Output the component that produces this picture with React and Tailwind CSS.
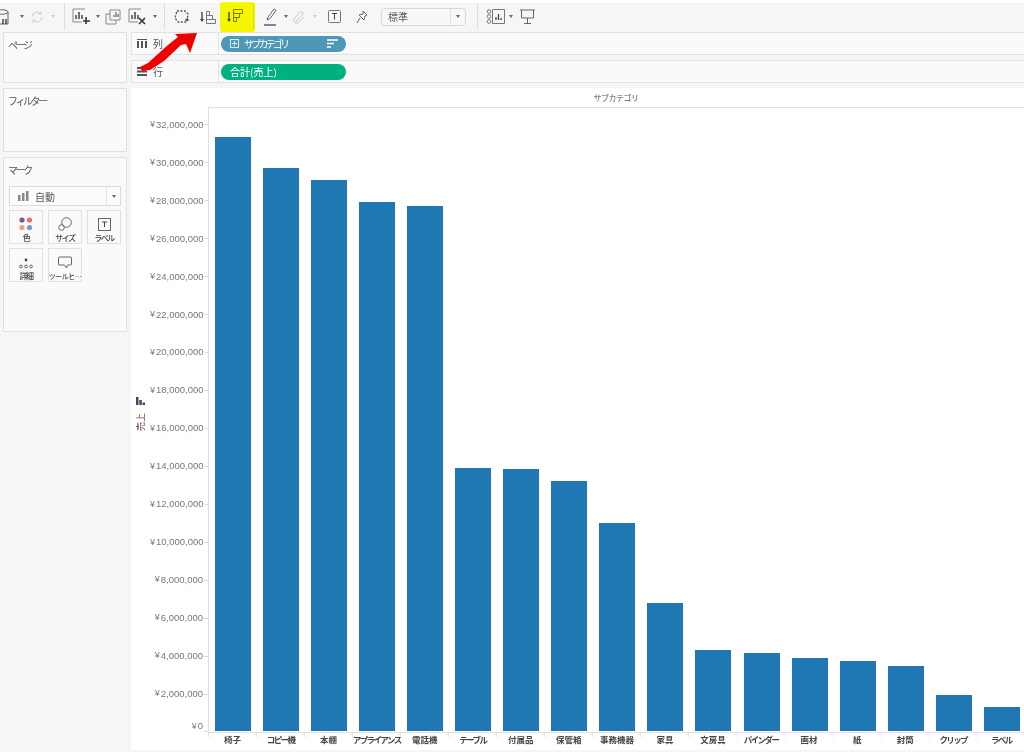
import React from 'react';

const font = { fontFamily: '"Noto Sans CJK JP", sans-serif' };

// sales per sub category, in millions of yen
const bars = [
  { name: '椅子', value: 31.31 },
  { name: 'コピー機', value: 29.68, kana: true },
  { name: '本棚', value: 29.05 },
  { name: 'アプライアンス', value: 27.89, kana: true },
  { name: '電話機', value: 27.68 },
  { name: 'テーブル', value: 13.86, kana: true },
  { name: '付属品', value: 13.81 },
  { name: '保管箱', value: 13.18 },
  { name: '事務機器', value: 10.96 },
  { name: '家具', value: 6.75 },
  { name: '文房具', value: 4.27 },
  { name: 'バインダー', value: 4.11, kana: true },
  { name: '画材', value: 3.85 },
  { name: '紙', value: 3.69 },
  { name: '封筒', value: 3.43 },
  { name: 'クリップ', value: 1.9, kana: true },
  { name: 'ラベル', value: 1.27, kana: true },
];

const ticks = [32, 30, 28, 26, 24, 22, 20, 18, 16, 14, 12, 10, 8, 6, 4, 2];

const Icon = ({ w = 18, h = 18, ml = 0, children, color = '#666' }) => (
  <svg
    width={w}
    height={h}
    viewBox={`0 0 ${w} ${h}`}
    fill="none"
    stroke={color}
    strokeWidth="1"
    className="shrink-0"
    style={{ marginLeft: ml }}
  >
    {children}
  </svg>
);

const Caret = ({ ml = 0, light }) => (
  <span
    className={`w-0 h-0 shrink-0 border-x-[2.5px] border-x-transparent border-t-[3px] ${light ? 'border-t-[#ccc]' : 'border-t-[#666]'}`}
    style={{ marginLeft: ml }}
  />
);

const Sep = ({ ml }) => <span className="w-px h-[27px] bg-[#dedede] shrink-0" style={{ marginLeft: ml }} />;

const Toolbar = () => (
  <div className="h-[32px] flex items-center pb-[2px] bg-[#f6f6f6] border-t-[3px] border-white">
    <Icon w={9} h={18} ml={0}>
      <path d="M-5 4c0-3 13-3 13 0v12H-5z M-5 4c0 3 13 3 13 0" />
      <path d="M3 11v5M6 11v5" stroke="#444" strokeWidth="1.5" />
    </Icon>
    <Caret ml={11} />
    <Icon w={16} h={16} ml={5} color="#ccc">
      <path d="M3 8a5 5 0 0 1 9-3M13 8a5 5 0 0 1-9 3" />
      <path d="M12 2v3H9M4 14v-3h3" />
    </Icon>
    <Caret ml={6} light />
    <Sep ml={9} />
    <Icon w={19} h={19} ml={6}>
      <path d="M14 2H2v13h9" stroke="#888" />
      <path d="M5 12V8M8 12V5M11 12V8" stroke="#444" strokeWidth="1.5" />
      <path d="M15 10v7M12 14h7" stroke="#333" strokeWidth="1.6" />
    </Icon>
    <Caret ml={6} />
    <Icon w={16} h={16} ml={5}>
      <path d="M5 1h10v10H5zM1 5h4M1 5v10h10v-4" stroke="#888" />
      <path d="M9 8V6M11 8V3M13 8V5" stroke="#444" />
    </Icon>
    <Icon w={19} h={19} ml={6}>
      <path d="M14 2H2v13h9" stroke="#888" />
      <path d="M5 12V8M8 12V5M11 12V8" stroke="#444" strokeWidth="1.5" />
      <path d="M12 11l6 6M18 11l-6 6" stroke="#333" strokeWidth="1.6" />
    </Icon>
    <Caret ml={7} />
    <Sep ml={7} />
    <Icon w={18} h={18} ml={8}>
      <path d="M4 3h8l3 3-1 8H5L2 10z" strokeDasharray="2 1.5" stroke="#555" strokeWidth="1.3" />
      <path d="M14 10l-2.500 2.500h5z" fill="#444" stroke="none" />
    </Icon>
    <Icon w={18} h={18} ml={8}>
      <path d="M3 4v9" stroke="#444" strokeWidth="1.4" />
      <path d="M1 11l2 3 2-3z" fill="#444" stroke="none" />
      <path d="M7.500 15.500h9v-4h-9zM7.500 11.500h6v-4h-6zM7.500 7.500h3v-4h-3z" stroke="#777" />
    </Icon>
    <Icon w={18} h={18} ml={9}>
      <path d="M3 4v9" stroke="#444" strokeWidth="1.4" />
      <path d="M1 11l2 3 2-3z" fill="#444" stroke="none" />
      <path d="M7.500 1.500h9v4h-9zM7.500 5.500h6v4h-6zM7.500 9.500h3v4h-3z" stroke="#777" />
    </Icon>
    <Sep ml={9} />
    <Icon w={16} h={20} ml={9}>
      <path d="M4 13l1-3 6-8 2 1.500-6 8z" stroke="#666" />
      <path d="M1 18h12" stroke="#555" strokeWidth="1.4" />
    </Icon>
    <Caret ml={5} />
    <Icon w={14} h={16} ml={4} color="#ccc">
      <path d="M4 13l7-8a2 2 0 0 0-3-2L2 10a3 3 0 0 0 4 4l6-6" />
    </Icon>
    <Caret ml={7} light />
    <Icon w={15} h={15} ml={10}>
      <rect x="1.500" y="1.500" width="12" height="12" rx="1" stroke="#777" />
      <path d="M5 4.500h5M7.500 4.500v6" stroke="#444" />
    </Icon>
    <Icon w={14} h={16} ml={13}>
      <path d="M8 2l4 4-2 1-1 4-5-5 4-1zM5 9l-3 5" stroke="#666" />
    </Icon>
    <div className="flex items-center w-[85px] h-[18px] ml-[12px] bg-[#f8f8f8] border border-[#d8d8d8] rounded-sm">
      <span className="flex-1 pl-[6px] text-[10px] leading-none text-[#555]">標準</span>
      <span className="flex items-center justify-center w-[15px] h-full border-l border-[#e2e2e2]">
        <Caret />
      </span>
    </div>
    <Sep ml={11} />
    <Icon w={20} h={18} ml={8}>
      <circle cx="3" cy="3.500" r="1.800" stroke="#777" />
      <circle cx="3" cy="8.500" r="1.800" stroke="#777" />
      <circle cx="3" cy="13.500" r="1.800" stroke="#777" />
      <path d="M6.500 1.500h12v14h-12z" stroke="#777" />
      <path d="M10 12V9M12.500 12V6M15 12v-2" stroke="#444" strokeWidth="1.3" />
    </Icon>
    <Caret ml={3} />
    <Icon w={17} h={17} ml={6}>
      <path d="M1 2h15M2.500 2v8h12V2M8.500 10v5M5 15.500h7" stroke="#666" />
    </Icon>
  </div>
);

const Shelf = ({ icon, label, pill, pillClass, extra }) => (
  <div className="h-[23px] flex bg-[#fafafa] border-y border-[#e2e2e2]">
    <div className="w-[88px] shrink-0 flex items-center border-x border-[#e2e2e2] pl-[3px] gap-[6px] text-[10px] text-[#555]">
      {icon}
      <span>{label}</span>
    </div>
    <div className="flex-1 flex items-center pl-[2px]">
      <div className={`w-[125px] h-[16px] rounded-full flex items-center text-[10px] text-white ${pillClass}`}>
        {extra}
        <span className={extra ? 'ml-[5px] tracking-[-2.8px]' : 'ml-[9px]'}>{pill}</span>
        {extra && (
          <svg width="11" height="9" viewBox="0 0 11 9" className="ml-auto mr-[8px]" stroke="#fff" strokeWidth="1.500">
            <path d="M0 1h11M0 4.500h7M0 8h4" />
          </svg>
        )}
      </div>
    </div>
  </div>
);

const Card = ({ title, className, children }) => (
  <div className={`bg-[#fafafa] border border-[#e0e0e0] ${className}`}>
    <div className="pl-[4px] pt-[5px] text-[10px] leading-[14px] text-[#555] tracking-[-2.400px]">{title}</div>
    {children}
  </div>
);

const MarkButton = ({ label, children, small }) => (
  <div className="w-[34px] h-[34px] bg-[#fafafa] border border-[#e0e0e0] flex flex-col items-center">
    <div className="h-[20px] flex items-end justify-center">{children}</div>
    <span className={`mt-[2px] leading-[10px] text-[#444] font-medium whitespace-nowrap ${small ? 'text-[7px] tracking-[-0.5px]' : 'text-[8px] tracking-[-1.5px]'}`}>
      {label}
    </span>
  </div>
);

const Marks = () => (
  <Card title="マーク" className="h-[175px] mt-[5px]">
    <div className="mx-[5px] mt-[9px] h-[20px] flex items-center bg-[#fcfcfc] border border-[#dcdcdc]">
      <svg width="12" height="10" viewBox="0 0 12 10" className="ml-[8px]" fill="#888">
        <rect x="0" y="4" width="2.500" height="6" />
        <rect x="4" y="2" width="2.500" height="8" />
        <rect x="8" y="0" width="2.500" height="10" />
      </svg>
      <span className="ml-[5px] flex-1 text-[10px] text-[#555]">自動</span>
      <span className="w-[14px] h-full flex items-center justify-center border-l border-[#e2e2e2]">
        <Caret />
      </span>
    </div>
    <div className="mx-[5px] mt-[4px] grid grid-cols-[34px_34px_35px] gap-x-[5px] gap-y-[4px]">
      <MarkButton label="色">
        <svg width="14" height="14" viewBox="0 0 14 14">
          <circle cx="3" cy="3" r="2.600" fill="#7b5a93" />
          <circle cx="10.500" cy="3" r="2.600" fill="#f0677c" />
          <circle cx="3" cy="10.500" r="2.600" fill="#f0a26a" />
          <circle cx="10.500" cy="10.500" r="2.600" fill="#6f9bd1" />
        </svg>
      </MarkButton>
      <MarkButton label="サイズ">
        <svg width="14" height="14" viewBox="0 0 14 14" fill="none" stroke="#666">
          <circle cx="8.500" cy="5.500" r="4.800" />
          <circle cx="3.500" cy="10.500" r="2.800" />
        </svg>
      </MarkButton>
      <MarkButton label="ラベル">
        <svg width="13" height="13" viewBox="0 0 13 13" fill="none" stroke="#666">
          <rect x="0.500" y="0.500" width="12" height="12" />
          <path d="M4 4h5M6.500 4v5" stroke="#444" />
        </svg>
      </MarkButton>
      <MarkButton label="詳細">
        <svg width="14" height="11" viewBox="0 0 14 11" fill="none" stroke="#666">
          <circle cx="7" cy="2" r="1.400" fill="#444" stroke="none" />
          <circle cx="2" cy="8.500" r="1.400" />
          <circle cx="7" cy="8.500" r="1.400" />
          <circle cx="12" cy="8.500" r="1.400" />
        </svg>
      </MarkButton>
      <MarkButton label="ツールヒ…" small>
        <svg width="14" height="13" viewBox="0 0 14 13" fill="none" stroke="#666">
          <path d="M1.500 1h11a1 1 0 0 1 1 1v6a1 1 0 0 1-1 1H9.500l-1 3-2-3h-5a1 1 0 0 1-1-1V2a1 1 0 0 1 1-1z" />
        </svg>
      </MarkButton>
    </div>
  </Card>
);

const YAxis = () => (
  <div className="w-[58px] shrink-0 pt-[18px]" style={{ fontFamily: '"Liberation Sans", sans-serif' }}>
    {ticks.map((t) => (
      <div key={t} className="h-[37.94px] flex items-center justify-end text-[9.5px] text-[#777] whitespace-nowrap">
        <span className="text-[9px] mr-[1px]">¥</span>
        <span>{t},000,000</span>
        <span className="w-[4px] h-px bg-[#d8d8d8] ml-[1px]" />
      </div>
    ))}
    <div className="h-[37.94px] flex items-center justify-end text-[9.5px] text-[#777] whitespace-nowrap">
      <span className="-translate-y-[6px] mr-[1px]">
        <span className="text-[9px] mr-[1px]">¥</span>0
      </span>
      <span className="w-[4px] h-px bg-[#d8d8d8]" />
    </div>
  </div>
);

const Chart = () => (
  <div className="h-[662px] flex bg-white overflow-hidden">
    <div className="w-[19px] shrink-0 pt-[309px] flex flex-col items-center">
      <svg width="9" height="8" viewBox="0 0 9 8" fill="#3f4a5a">
        <rect x="0" y="0" width="2.500" height="8" />
        <rect x="3.300" y="3" width="2.500" height="5" />
        <rect x="6.600" y="5.500" width="2.400" height="2.500" />
      </svg>
      <span className="mt-[8px] text-[9px] leading-none text-[#6b4a5c] rotate-180 [writing-mode:vertical-rl] [text-orientation:sideways]">売上</span>
    </div>
    <YAxis />
    <div className="flex-1 min-w-0">
      <div className="h-[19px] flex items-center justify-center text-[8px] text-[#555] tracking-[-0.5px]">サブカテゴリ</div>
      <div className="h-[625px] flex items-end gap-[12.05px] pl-[6px] pb-[1px] border-t border-l border-[#e0e0e0]">
        {bars.map((b) => (
          <div key={b.name} className="w-[36px] shrink-0 bg-[#1f77b4]" style={{ height: b.value * 18.97 }} />
        ))}
      </div>
      <div className="flex border-t border-[#e0e0e0] h-[18px]">
        {bars.map((b) => (
          <div key={b.name} className={`w-[48.05px] shrink-0 flex justify-center border-l border-[#e4e4e4] h-[4px] text-[8.5px] leading-[12px] font-bold text-[#444] whitespace-nowrap ${b.kana ? 'tracking-[-1.6px]' : ''}`}>
            <span>{b.name}</span>
          </div>
        ))}
      </div>
    </div>
  </div>
);

export default function App() {
  return (
    <div className="relative w-[1024px] h-[752px] overflow-hidden bg-[#f6f6f6]" style={font}>
      <Toolbar />
      <div className="flex">
        <div className="w-[131px] shrink-0 pl-[3px] pr-[4px]">
          <Card title="ページ" className="h-[51px]" />
          <Card title="フィルター" className="h-[64px] mt-[5px]" />
          <Marks />
        </div>
        <div className="flex-1 min-w-0">
          <Shelf
            label="列"
            pill="サブカテゴリ"
            pillClass="bg-[#4e97b6]"
            icon={
              <svg width="10" height="9" viewBox="0 0 10 9" className="ml-[2px]" fill="#555">
                <rect x="0" y="2" width="2" height="7" />
                <rect x="4" y="2" width="2" height="7" />
                <rect x="8" y="2" width="2" height="7" />
                <rect x="0" y="0" width="10" height="1" />
              </svg>
            }
            extra={
              <svg width="9" height="9" viewBox="0 0 9 9" className="ml-[9px]" fill="none" stroke="#fff" strokeWidth="0.800">
                <rect x="0.500" y="0.500" width="8" height="8" />
                <path d="M4.500 2v5M2 4.500h5" />
              </svg>
            }
          />
          <div className="mt-[5px] mb-[5px]">
            <Shelf
              label="行"
              pill="合計(売上)"
              pillClass="bg-[#00b180]"
              icon={
                <svg width="10" height="9" viewBox="0 0 10 9" className="ml-[2px]" fill="#555">
                  <rect x="0" y="0" width="10" height="2" />
                  <rect x="0" y="3.500" width="10" height="2" />
                  <rect x="0" y="7" width="10" height="2" />
                </svg>
              }
            />
          </div>
          <Chart />
        </div>
      </div>

      {/* annotations drawn on top of the screenshot */}
      <div className="absolute left-[220px] top-[2px] w-[35px] h-[30px] bg-[#ffff00] rounded-[3px] mix-blend-multiply" />
      <svg className="absolute left-0 top-0" width="260" height="80" viewBox="0 0 260 80" fill="#f00000">
        <path d="M140 67l8-4 20-18 10-8-3-3 22-1-7 20-4-9-5 1-17 16-14 9-8 1z" />
      </svg>
    </div>
  );
}
